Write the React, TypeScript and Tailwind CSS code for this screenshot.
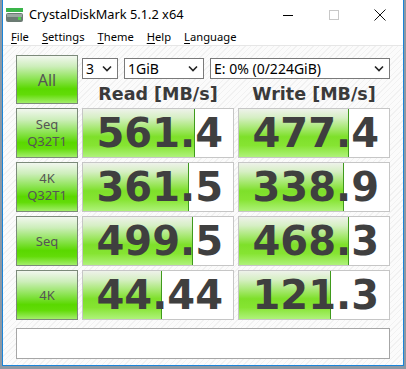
import React from "react";

const ui = { fontFamily: '"Noto Sans", "Open Sans", sans-serif' };
const num = { fontFamily: '"DejaVu Sans", Verdana, sans-serif' };

const rows = [
  { label: ["Seq", "Q32T1"], read: "561.4", write: "477.4", rf: 112, wf: 110 },
  { label: ["4K", "Q32T1"], read: "361.5", write: "338.9", rf: 106, wf: 105 },
  { label: ["Seq"], read: "499.5", write: "468.3", rf: 110, wf: 110 },
  { label: ["4K"], read: "44.44", write: "121.3", rf: 79, wf: 92 },
];

const btnBg =
  "bg-[linear-gradient(to_bottom,#f2f7ef_0%,#cdeebb_22%,#8ee456_48%,#5ad800_70%,#62dc08_82%,#a2ee6a_100%)]";

const Chevron = () => (
  <svg width="10" height="7" viewBox="0 0 10 7" className="shrink-0">
    <polyline points="1,1.5 5,5.5 9,1.5" fill="none" stroke="#222" strokeWidth="1.6" />
  </svg>
);

const Select = ({ text, w }: { text: string; w: string }) => (
  <div className={`${w} h-[21px] bg-white border border-[#7a7a7a] flex items-center justify-between pl-[3px] pr-[5px] text-[14px] text-black`}>
    <span className="leading-none">{text}</span>
    <Chevron />
  </div>
);

const Value = ({ v, fill }: { v: string; fill: number }) => (
  <div className="relative h-[50px] bg-white border border-[#c6c6c6] flex items-center justify-end pr-[10px]">
    <div
      className="absolute left-0 top-0 bottom-0 border-r border-[#3f9a1c] bg-[linear-gradient(to_bottom,#eef2ea_0%,#d6efc4_18%,#a6e870_40%,#7ee02a_58%,#86e432_76%,#aef27a_100%)]"
      style={{ width: fill }}
    />
    <span style={num} className="relative text-[40px] font-bold text-[#3f3f3f] leading-none">
      {v}
    </span>
  </div>
);

export default function App() {
  return (
    <div className="w-[406px] h-[369px] bg-[#8c98a4] overflow-hidden" style={ui}>
      <div className="ml-[2px] w-[402px] h-[366px] border-l border-r border-b border-[#1a84d8] bg-white flex flex-col">
        {/* title bar */}
        <div className="h-[30px] flex items-center shrink-0">
          <svg width="17" height="14" viewBox="0 0 17 14" className="ml-[3px]">
            <rect x="0" y="0" width="17" height="4" fill="#3ab54a" />
            <rect x="0" y="5" width="17" height="9" rx="2" fill="#6b7b73" />
            <rect x="1" y="6" width="15" height="3" fill="#9aa8a0" />
            <rect x="12" y="9" width="3" height="3" fill="#4cd14c" />
          </svg>
          <span className="ml-[6px] text-[12.8px] text-black">CrystalDiskMark 5.1.2 x64</span>
          <div className="ml-auto flex h-full">
            <div className="w-[46px] flex items-center justify-center">
              <div className="w-[10px] h-px bg-black" />
            </div>
            <div className="w-[46px] flex items-center justify-center">
              <div className="w-[10px] h-[10px] border border-[#c8c8c8]" />
            </div>
            <div className="w-[46px] flex items-center justify-center">
              <svg width="12" height="12" viewBox="0 0 12 12">
                <path d="M0.5 0.5 L11.5 11.5 M11.5 0.5 L0.5 11.5" stroke="#111" strokeWidth="1" />
              </svg>
            </div>
          </div>
        </div>
        {/* menu */}
        <div className="h-[14px] flex items-center gap-[13px] pl-[8px] text-[11.2px] text-black shrink-0">
          {["File", "Settings", "Theme", "Help", "Language"].map((m) => (
            <span key={m} className="leading-none">
              <span className="underline underline-offset-2">{m[0]}</span>
              {m.slice(1)}
            </span>
          ))}
        </div>
        <div className="h-px bg-[#e6e6e6] shrink-0 mt-[1px]" />
        {/* client */}
        <div className="flex-1 pl-[13px] pt-[9px] bg-[repeating-linear-gradient(135deg,#fbfbfb_0px,#fbfbfb_3px,#f1f1f1_3px,#f1f1f1_4px)]">
          <div className="flex gap-[4px]">
            <div className={`w-[62px] h-[49px] border border-[#7c8a7a] ${btnBg} flex items-center justify-center text-[16px] text-[#555]`}>
              All
            </div>
            <div className="flex flex-col">
              <div className="flex mt-[3px]">
                <Select text="3" w="w-[36px]" />
                <div className="w-[6px]" />
                <Select text="1GiB" w="w-[80px]" />
                <div className="w-[6px]" />
                <Select text="E: 0% (0/224GiB)" w="w-[180px]" />
              </div>
              <div className="flex mt-[7px]" style={num}>
                <div className="w-[152px] text-center text-[17.5px] font-bold text-[#3a3a3a] leading-none">Read [MB/s]</div>
                <div className="w-[4px]" />
                <div className="w-[152px] text-center text-[17.5px] font-bold text-[#3a3a3a] leading-none">Write [MB/s]</div>
              </div>
            </div>
          </div>
          <div className="mt-[4px] grid grid-cols-[62px_152px_152px] gap-x-[4px] gap-y-[4px]">
            {rows.map((r) => (
              <React.Fragment key={r.read}>
                <div className={`h-[50px] border border-[#7c8a7a] ${btnBg} flex flex-col items-center justify-center text-[13px] text-[#555] leading-[17px]`}>
                  {r.label.map((l) => (
                    <span key={l}>{l}</span>
                  ))}
                </div>
                <Value v={r.read} fill={r.rf} />
                <Value v={r.write} fill={r.wf} />
              </React.Fragment>
            ))}
          </div>
          <div className="mt-[8px] w-[374px] h-[31px] bg-white border border-[#a6a6a6]" />
        </div>
      </div>
    </div>
  );
}
